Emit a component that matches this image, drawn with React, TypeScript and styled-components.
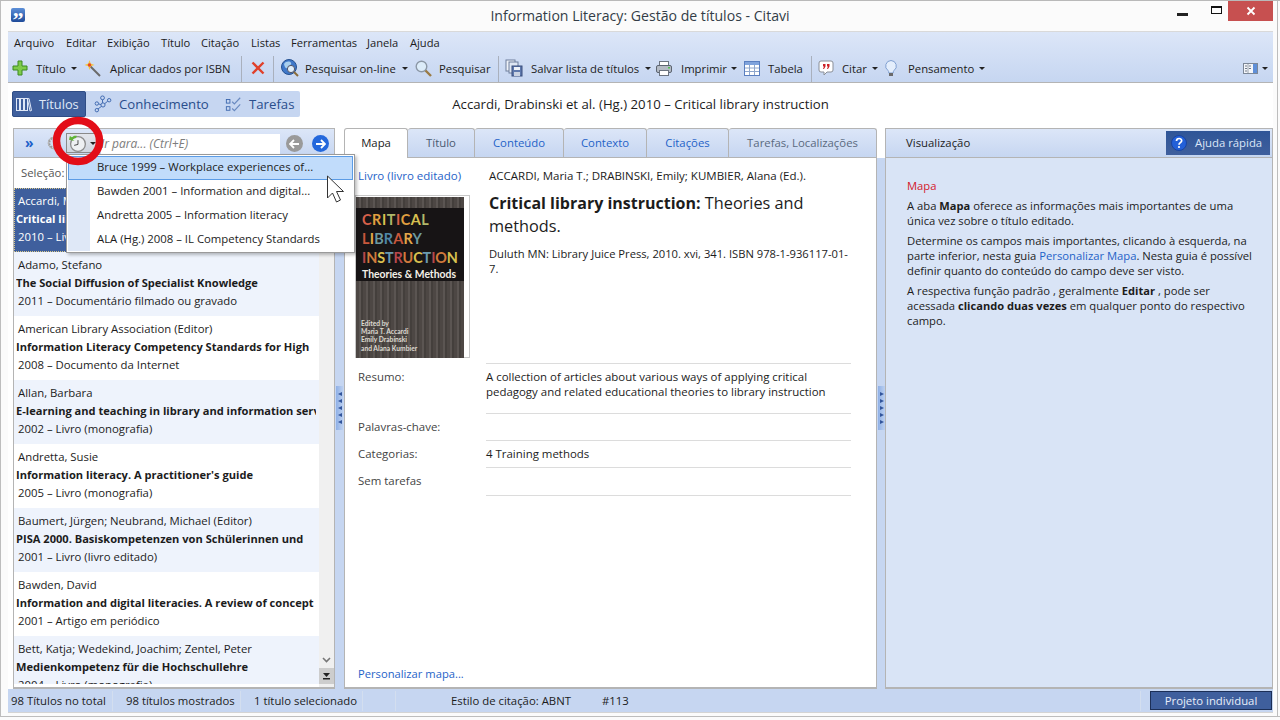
import React from "react";
import styled, { createGlobalStyle } from "styled-components";

const FONT = `"Open Sans", "Noto Sans", "Liberation Sans", sans-serif`;

const Global = createGlobalStyle`
  html, body { margin: 0; padding: 0; width: 1280px; height: 720px; overflow: hidden; background: #fbfbfb; }
  * { box-sizing: border-box; }
  #root { width: 1280px; height: 720px; }
  b { font-size: 11.1px; }
`;

const Win = styled.div`
  position: relative; width: 1280px; height: 720px; background: #fbfbfb;
  font: 11.35px/15px ${FONT}; color: #1c1c1c; overflow: hidden;
  border-top: 1px solid #b9b9b9;
  display: flex; flex-direction: column;
  padding: 0 7px 0 8px;
  &::before { content: ""; position: absolute; left: 0; top: 0; bottom: 3px; width: 1px; background: #bdbdbd; }
  &::after { content: ""; position: absolute; right: 2px; top: 0; bottom: 3px; width: 1px; background: #bdbdbd; }
`;
const TitleBar = styled.div`
  height: 30px; flex: none; display: flex; align-items: flex-start; position: relative; margin-left: -8px; margin-right: -7px; padding-left: 11px;
`;
const AppIcon = styled.div`
  width: 14px; height: 14px; margin-top: 7px; border-radius: 2px; background: linear-gradient(#5c8fd8, #1f4b9a); color: #fff;
  font: bold 22px/24px "Liberation Serif", serif; text-align: center; flex: none; overflow: hidden;
`;
const TitleText = styled.div`
  position: absolute; left: 0; right: 0; top: 0; text-align: center; font-size: 14.1px; line-height: 30px; color: #333d47;
`;
const WinBtns = styled.div`margin-left: auto; display: flex; align-items: flex-start; height: 30px; padding-right: 7px;`;
const WinBtn = styled.div<{ $w: number; $close?: boolean }>`
  width: ${(p) => p.$w}px; height: 20px; display: flex; align-items: center; justify-content: center;
  background: ${(p) => (p.$close ? "#c75050" : "transparent")};
`;
const MinGlyph = styled.div`width: 11px; height: 3px; background: #222; margin-top: 7px;`;
const MaxGlyph = styled.div`width: 11px; height: 8px; border: 1px solid #111; border-top-width: 2px; margin-top: -3px;`;

const Chrome = styled.div`
  flex: none; height: 52px; background: linear-gradient(#dce6f8, #c6d6f1); border-bottom: 1px solid #b4b4b4; border-top: 1px solid #d9d9d9;
  display: flex; flex-direction: column;
`;
const MenuBar = styled.div`display: flex; height: 22px; align-items: center; padding: 0 0 2px 6px; font-size: 11.15px;`;
const MenuItem = styled.div<{ $w: number }>`width: ${(p) => p.$w}px; white-space: nowrap;`;
const Tools = styled.div`display: flex; height: 28px; align-items: center; position: relative; font-size: 11.3px;`;
const Tool = styled.div<{ $left: number }>`
  position: absolute; left: ${(p) => p.$left}px; top: 0; height: 28px; display: flex; align-items: center; white-space: nowrap;
`;
const Caret = styled.span<{ $c?: string }>`
  display: inline-block; width: 0; height: 0; border: 3px solid transparent; border-top: 3px solid ${(p) => p.$c || "#222"}; margin-top: 3px;
`;
const Sep = styled.div<{ $left: number }>`position: absolute; left: ${(p) => p.$left}px; top: 2px; height: 26px; width: 1px; background: #a9b0bd;`;

const SubBar = styled.div`flex: none; height: 45px; display: flex; align-items: center; position: relative; padding: 0 0 3px 4px; background: #fff;`;
const Nav = styled.div`width: 288px; height: 26px; background: #c6d6f1; border-radius: 2px; display: flex; align-items: center; color: #2a4e8c; font-size: 13.2px;`;
const NavBtn = styled.div<{ $w: number; $pad: number; $on?: boolean }>`
  width: ${(p) => p.$w}px; height: 26px; display: flex; align-items: center; gap: 7px; padding-left: ${(p) => p.$pad}px; white-space: nowrap; font-size: ${(p) => (p.$on ? "12.8px" : "13.2px")};
  ${(p) => (p.$on ? "background:#3f5f9d;color:#dfe8f7;border:1px solid #2f4d86;border-radius:2px;" : "")}
`;
const SubTitle = styled.div`position: absolute; left: 0; right: 0; top: 14px; text-align: center; font-size: 13.2px; color: #1c1c1c;`;

const Body = styled.div`
  flex: none; height: 561px; display: flex; background: #fff; padding: 0 0 0 5px; position: relative;
`;
const LeftPanel = styled.div`width: 322px; flex: none; border: 1px solid #b4b4b4; border-bottom-width: 2px; display: flex; flex-direction: column; background: #fff; height: 561px;`;
const LeftBar = styled.div`
  height: 29px; flex: none; background: linear-gradient(#dce6f8, #c6d6f1); border-bottom: 1px solid #b4b4b4; display: flex; align-items: center; position: relative;
`;
const SearchBox = styled.div`
  position: absolute; left: 87px; top: 5px; width: 179px; height: 20px; background: #fff; color: #7d7d7d; font-style: italic; font-size: 12px; line-height: 20px; white-space: nowrap;
`;
const Chevrons = styled.div`position: absolute; left: 11px; top: 5px; color: #1c5fc9; font: bold 14px/18px ${FONT};`;
const RoundBtn = styled.div<{ $left: number; $bg: string }>`
  position: absolute; left: ${(p) => p.$left}px; top: 6px; width: 17px; height: 17px; border-radius: 50%; background: ${(p) => p.$bg};
  display: flex; align-items: center; justify-content: center;
`;
const Selecao = styled.div`height: 30px; flex: none; padding: 7px 0 0 7px; color: #555;`;
const ListWrap = styled.div`flex: 1; min-height: 0; display: flex; overflow: hidden;`;
const List = styled.div`flex: 1; min-width: 0; overflow: hidden; padding-bottom: 3px;`;
const ListClip = styled.div`height: 100%; overflow: hidden;`;
const Row = styled.div<{ $tone: "sel" | "odd" | "even" }>`
  height: 64px; padding: 4px 3px 0 2px; overflow: hidden; white-space: nowrap; line-height: 18px;
  background: ${(p) => (p.$tone === "sel" ? "#3f5f9d" : p.$tone === "odd" ? "#eef3fc" : "#fff")};
  color: ${(p) => (p.$tone === "sel" ? "#fff" : "#1c1c1c")};
  ${(p) => (p.$tone === "sel" ? "outline: 1px dotted #d8c88a; outline-offset: -1px;" : "")}
`;
const RowSub = styled.div`padding-left: 2px;`;
const RowBold = styled.div`font-weight: 700; font-size: 11.1px; overflow: hidden;`;
const Scroll = styled.div`width: 15px; flex: none; background: #f0f0f0; display: flex; flex-direction: column; justify-content: flex-end; align-items: center; padding-bottom: 3px;`;
const ScrollBtn = styled.div<{ $on?: boolean }>`width: 15px; height: 16px; display: flex; align-items: center; justify-content: center; ${(p) => (p.$on ? "background:#cdcdcd;" : "")}`;

const Splitter = styled.div<{ $w: number }>`width: ${(p) => p.$w}px; flex: none; position: relative; background: linear-gradient(#fff 0 30px, #c6d6f1 30px);`;
const Grip = styled.div`
  position: absolute; left: 1px; top: 258px; width: 7px; height: 44px; background: linear-gradient(90deg, #8fb0e6, #bcd0f0);
  display: flex; flex-direction: column; align-items: center; justify-content: center; gap: 3px;
`;
const GripTri = styled.div<{ $right?: boolean }>`
  width: 0; height: 0; border-top: 2.5px solid transparent; border-bottom: 2.5px solid transparent;
  ${(p) => (p.$right ? "border-left: 4px solid #32559c;" : "border-right: 4px solid #32559c;")}
`;

const MainPanel = styled.div`width: 533px; flex: none; display: flex; flex-direction: column; height: 561px;`;
const Tabs = styled.div`display: flex; height: 30px; flex: none; border-bottom: 1px solid #b4b4b4; background: #fff;`;
const TabItem = styled.div<{ $w: number; $on?: boolean; $c?: string }>`
  width: ${(p) => p.$w}px; height: ${(p) => (p.$on ? 30 : 29)}px; display: flex; align-items: center; justify-content: center; white-space: nowrap; padding-bottom: ${(p) => (p.$on ? 2 : 1)}px;
  border: 1px solid #b4b4b4; border-left-width: ${(p) => (p.$on ? 1 : 0)}px; border-bottom: 0; border-radius: 3px 3px 0 0; margin-bottom: -1px; position: relative; z-index: ${(p) => (p.$on ? 1 : 0)};
  background: ${(p) => (p.$on ? "#fff" : "linear-gradient(#dce6f8, #c6d6f1)")};
  color: ${(p) => p.$c || "#1c1c1c"};
`;
const MapBody = styled.div`flex: 1; min-height: 0; background: #fff; border: 1px solid #b4b4b4; border-top: 0; border-bottom-width: 2px; padding: 10px 25px 6px 13px; display: flex; flex-direction: column;`;
const Top = styled.div`display: flex; height: 195px; flex: none;`;
const CoverCol = styled.div`width: 131px; flex: none; display: flex; flex-direction: column;`;
const Link = styled.div`color: #1f63c8; white-space: nowrap; height: 27px; font-size: 11.5px;`;
const CoverFrame = styled.div`width: 115px; height: 163px; margin-left: -3px; border: 1px solid #c8c8c8; padding: 1px 5px 0 0;`;
const Cover = styled.div`
  width: 108px; height: 161px; background: repeating-linear-gradient(90deg, #4d4744 0 3px, #5b5552 3px 5px, #443f3c 5px 7px);
  display: flex; flex-direction: column; color: #e6e2da; position: relative;
`;
const CoverBand = styled.div`margin-top: 11px; background: #171415; height: 73px; padding: 2px 0 0 6px;`;
const CoverLine = styled.div<{ $s: number }>`font: 700 14.4px/19px Lato, sans-serif; letter-spacing: ${(p) => p.$s}px; white-space: nowrap;`;
const L = styled.span<{ $c: string }>`color: ${(p) => p.$c};`;
const CoverSub = styled.div`font: 700 10.4px/14px Lato, sans-serif; color: #f4f0e8; white-space: nowrap;`;
const CoverEd = styled.div`margin-top: auto; padding: 0 0 6px 5px; font: 700 6.7px/8.3px Lato, sans-serif; color: #dedad2; white-space: nowrap;`;
const Info = styled.div`flex: 1; min-width: 0; padding-left: 0;`;
const Authors = styled.div`height: 18px; white-space: nowrap; font-size: 11.5px;`;
const BookTitle = styled.div`font-size: 16.3px; line-height: 23px; margin: 6px 0 8px; b { font-size: 16px; }`;
const Pub = styled.div`line-height: 15px; font-size: 11.2px;`;
const Field = styled.div<{ $h: number; $pad: number; $top?: boolean }>`
  display: grid; grid-template-columns: 128px 1fr; height: ${(p) => p.$h}px; padding-top: ${(p) => p.$pad}px; position: relative; font-size: 11.45px;
  &::after { content: ""; position: absolute; left: 128px; right: 0; bottom: 0; height: 1px; background: #dcdcdc; }
  ${(p) => (p.$top ? `&::before { content: ""; position: absolute; left: 128px; right: 0; top: 0; height: 1px; background: #dcdcdc; }` : "")}
`;
const FieldLabel = styled.div`color: #444;`;
const Spacer = styled.div`flex: 1;`;
const LinkBottom = styled.div`color: #1f63c8; font-size: 11.2px;`;

const RightPanel = styled.div`width: 388px; flex: none; display: flex; flex-direction: column; height: 561px; border: 1px solid #b4b4b4; border-bottom-width: 2px;`;
const RightHead = styled.div`height: 29px; flex: none; background: linear-gradient(#dce6f8, #c6d6f1); border-bottom: 1px solid #b4b4b4; display: flex; align-items: center; padding: 0 2px 1px 20px;`;
const HelpBtn = styled.div`margin-left: auto; width: 104px; height: 24px; background: linear-gradient(#2f5597, #3f5f9d); color: #dce6f8; display: flex; align-items: center; gap: 8px; padding-left: 5px; white-space: nowrap;`;
const RightBody = styled.div`flex: 1; background: #d9e4f6; padding: 20px 20px 0 21px; font-size: 11.25px;`;
const Red = styled.div`color: #d4182c; margin-bottom: 5px; line-height: 15px;`;
const Para = styled.p`margin: 0 0 5px; line-height: 15px; color: #1c1c1c;`;
const BlueLink = styled.span`color: #1f63c8;`;

const Status = styled.div`flex: none; height: 24px; background: #c6d6f1; display: flex; align-items: center; border-bottom: 1px solid #d4d4d4; position: relative;`;
const Stat = styled.div<{ $w: number; $pad: number; $line?: boolean }>`
  width: ${(p) => p.$w}px; padding-left: ${(p) => p.$pad}px; white-space: nowrap; flex: none; height: 20px; line-height: 20px;
  ${(p) => (p.$line ? "border-right: 1px solid #d3deef;" : "")}
`;
const ProjBtn = styled.div`margin-left: auto; width: 122px; height: 19px; background: #3f5f9d; color: #e8eefa; border: 1px solid #1c2f57; text-align: center; line-height: 17px; margin-right: 1px; position: relative;
  &::before { content: ""; position: absolute; left: -11px; top: -1px; width: 1px; height: 20px; background: #d3deef; }
`;
const BottomLine = styled.div`position: absolute; left: 0; right: 0; bottom: 3px; height: 1px; background: #bdbdbd;`;

const Menu = styled.div`
  position: absolute; left: 66px; top: 153px; width: 289px; height: 99px; background: #fff; border: 1px solid #9a9a9a; padding: 1px; z-index: 5;
  box-shadow: 2px 2px 3px rgba(0,0,0,.25);
  &::before { content: ""; position: absolute; left: 1px; top: 1px; bottom: 1px; width: 22px; background: #dfe8f7; }
`;
const MenuRow = styled.div<{ $on?: boolean }>`
  position: relative; height: 24px; line-height: 20px; padding-left: 28px; white-space: nowrap;
  border: 1px solid ${(p) => (p.$on ? "#5b9ce6" : "transparent")};
  background: ${(p) => (p.$on ? "#c1dcfb" : "transparent")};
`;
const RingBox = styled.div`position: absolute; left: 50px; top: 112px; z-index: 7;`;
const HistBtn = styled.div`
  position: absolute; left: 66px; top: 132px; width: 31px; height: 20px; background: linear-gradient(#e3e6ec, #cfd5df); border: 1px solid #8a8a8a; z-index: 6; display: flex; align-items: center; gap: 3px; padding-left: 1px;
`;
const GearBox = styled.div`position: absolute; left: 46px; top: 133px; z-index: 4;`;
const CursorBox = styled.div`position: absolute; left: 326px; top: 174px; z-index: 8;`;

const Plus = () => (
  <svg width="16" height="16" viewBox="0 0 16 16"><path d="M6 1h4v5h5v4h-5v5H6v-5H1V6h5z" fill="#7fcb4a" stroke="#3c8a1e" /></svg>
);
const Wand = () => (
  <svg width="17" height="17" viewBox="0 0 17 17"><path d="M6.500 6.500l9.500 9.500" stroke="#6a6a6a" strokeWidth="2" /><path d="M5.500 0l1.200 3.500 3.800 1.500-3.800 1.300L5.500 10 4.300 6.300.5 5l3.800-1.500z" fill="#f5c33c" /><circle cx="5.500" cy="5" r="1.700" fill="#e5482d" /></svg>
);
const RedX = () => (
  <svg width="14" height="14" viewBox="0 0 14 14"><path d="M1.500 1.500l11 11M12.500 1.500l-11 11" stroke="#e0402a" strokeWidth="2.400" /></svg>
);
const Globe = () => (
  <svg width="18" height="18" viewBox="0 0 18 18"><circle cx="8" cy="8" r="7.500" fill="#3f78c9" stroke="#24508f" /><path d="M3 5c2-3 6-3 7-1s-2 2-3 4-3 2-4-3z" fill="#a8cfee" /><circle cx="10" cy="10" r="3.600" fill="#dfeefa" stroke="#556" /><path d="M13 13l4 4" stroke="#8a6d3a" strokeWidth="2" /></svg>
);
const Mag = () => (
  <svg width="17" height="17" viewBox="0 0 17 17"><circle cx="6.500" cy="6.500" r="5.300" fill="#dcecf9" stroke="#8c98a6" strokeWidth="1.400" /><path d="M10.500 10.500l5.500 5.500" stroke="#9a7b45" strokeWidth="2.400" /></svg>
);
const Save = () => (
  <svg width="18" height="18" viewBox="0 0 18 18"><rect x="1" y="1" width="9" height="11" fill="#eef2f8" stroke="#6e7f9c" /><rect x="4" y="3" width="9" height="11" fill="#dfe7f3" stroke="#6e7f9c" /><rect x="7" y="7" width="10" height="10" fill="#5f79ad" stroke="#3a4f7d" /><rect x="9" y="8" width="6" height="3" fill="#eef2f8" /><rect x="9" y="13" width="6" height="4" fill="#c9d2e2" /></svg>
);
const Printer = () => (
  <svg width="16" height="15" viewBox="0 0 16 15"><rect x="3.500" y=".5" width="9" height="5" fill="#fff" stroke="#6c7480" /><rect x=".5" y="4.500" width="15" height="7" rx="1.500" fill="#b4bbc5" stroke="#5c6470" /><rect x="3.500" y="9.500" width="9" height="5" fill="#fff" stroke="#6c7480" /><rect x="12" y="6" width="2" height="1.500" fill="#4fc04f" /></svg>
);
const TableIco = () => (
  <svg width="16" height="15" viewBox="0 0 16 15"><rect x=".5" y=".5" width="15" height="14" fill="#fff" stroke="#5a7fc0" /><rect x="1" y="1" width="14" height="3" fill="#7fa3dc" /><path d="M1 7h14M1 10.500h14M5.500 4v10M10.500 4v10" stroke="#8ea6cc" /></svg>
);
const Quote = () => (
  <svg width="16" height="16" viewBox="0 0 16 16"><path d="M3 1h10a2 2 0 012 2v7a2 2 0 01-2 2H9l-3 3v-3H3a2 2 0 01-2-2V3a2 2 0 012-2z" fill="#fff" stroke="#8a8f98" /><path d="M5 4h2.500v2.500L6 9H5l1-2.500H5zM9 4h2.500v2.500L10 9H9l1-2.500H9z" fill="#cc2127" /></svg>
);
const Bulb = () => (
  <svg width="12" height="17" viewBox="0 0 12 17"><path d="M6 .5a5.500 5.500 0 00-3 10c.6.600.8 1.500.8 2.500h4.400c0-1 .2-1.900.8-2.500a5.500 5.500 0 00-3-10z" fill="#e4eefc" stroke="#7f9fd0" /><rect x="4" y="13" width="4" height="3" fill="#6a6a6a" /></svg>
);
const Layout = () => (
  <svg width="15" height="11" viewBox="0 0 15 11"><rect x=".5" y=".5" width="14" height="10" fill="#f4f6fa" stroke="#7c8797" /><rect x="10" y="1" width="4" height="9" fill="#5f8fd8" /><path d="M2 3h2M2 5.500h2M2 8h2M6 3h2M6 5.500h2" stroke="#707a88" /><path d="M5 1v9" stroke="#9aa3ae" /></svg>
);
const Books = () => (
  <svg width="16" height="15" viewBox="0 0 16 15" fill="none" stroke="#dfe8f7"><rect x=".5" y="1.500" width="3" height="12" /><rect x="4.500" y="1.500" width="3" height="12" /><rect x="8.500" y="1.500" width="3" height="12" /><path d="M11.500 2l1.500-.5 2.500 12-1.500.5z" /></svg>
);
const Network = () => (
  <svg width="18" height="18" viewBox="0 0 19 19" fill="none" stroke="#3b66ad"><circle cx="9" cy="3" r="2" /><circle cx="16" cy="5.500" r="1.800" /><circle cx="3" cy="9" r="1.800" /><circle cx="9.500" cy="10.500" r="2.200" /><circle cx="3" cy="16" r="1.800" /><path d="M9 5v3.300M14.500 6.500l-3.200 2.700M4.800 9.400l2.500.7M4.300 14.700l3.600-2.700" /></svg>
);
const Tasks = () => (
  <svg width="17" height="16" viewBox="0 0 19 17" fill="none" stroke="#3b66ad"><rect x="1.500" y="3.500" width="4" height="4" /><rect x="1.500" y="11.500" width="4" height="4" /><path d="M8 6l2.500 2.500L17 1.500M8 13.500l2.500 2.500L17 9" stroke="#6a8ac0" strokeWidth="1.300" /></svg>
);
const Clock = () => (
  <svg width="20" height="18" viewBox="0 0 20 19"><circle cx="10.500" cy="10.500" r="7.800" fill="#eef0f2" stroke="#8d8d8d" strokeWidth="1.400" /><path d="M10.500 6.500v4.500l-4 1" stroke="#444" fill="none" /><path d="M1 6l1-4 2 1.500C6 1.500 8 1.500 9.500 2L8 4.500C6.500 4.500 5.500 5 5 6l2 1.500z" fill="#5fb536" /></svg>
);
const Gear = () => (
  <svg width="16" height="18" viewBox="0 0 16 18"><circle cx="8" cy="9" r="5" fill="none" stroke="#9a9a9a" strokeWidth="2.400" strokeDasharray="2.200 1" /><circle cx="8" cy="9" r="5.800" fill="none" stroke="#b5b5b5" strokeWidth="1" /></svg>
);
const Arrow = ({ left }: { left?: boolean }) => (
  <svg width="11" height="10" viewBox="0 0 11 10"><path d={left ? "M5 1L1 5l4 4M1 5h9" : "M6 1l4 4-4 4M10 5H1"} stroke="#fff" strokeWidth="1.800" fill="none" /></svg>
);
const Help = () => (
  <svg width="16" height="16" viewBox="0 0 16 16"><circle cx="8" cy="8" r="7.500" fill="#2360d8" stroke="#1a44a0" /><path d="M5.500 6c0-3.300 5.200-3.300 5.200-.2 0 1.800-2.700 2-2.700 4" stroke="#fff" strokeWidth="1.700" fill="none" /><circle cx="8" cy="12" r="1.100" fill="#fff" /></svg>
);

const people = [
  { tone: "odd", a: "Adamo, Stefano", t: "The Social Diffusion of Specialist Knowledge", s: "2011 – Documentário filmado ou gravado" },
  { tone: "even", a: "American Library Association (Editor)", t: "Information Literacy Competency Standards for High", s: "2008 – Documento da Internet" },
  { tone: "odd", a: "Allan, Barbara", t: "E-learning and teaching in library and information serv", s: "2002 – Livro (monografia)" },
  { tone: "even", a: "Andretta, Susie", t: "Information literacy. A practitioner's guide", s: "2005 – Livro (monografia)" },
  { tone: "odd", a: "Baumert, Jürgen; Neubrand, Michael (Editor)", t: "PISA 2000. Basiskompetenzen von Schülerinnen und", s: "2001 – Livro (livro editado)" },
  { tone: "even", a: "Bawden, David", t: "Information and digital literacies. A review of concept", s: "2001 – Artigo em periódico" },
  { tone: "odd", a: "Bett, Katja; Wedekind, Joachim; Zentel, Peter", t: "Medienkompetenz für die Hochschullehre", s: "2004 – Livro (monografia)" },
] as const;

const Multi = ({ text, colors }: { text: string; colors: string[] }) => (
  <>
    {text.split("").map((c, i) => (
      <L key={i} $c={colors[i % colors.length]}>{c}</L>
    ))}
  </>
);

export default function App() {
  return (
    <Win>
      <Global />
      <TitleBar>
        <AppIcon>”</AppIcon>
        <TitleText>Information Literacy: Gestão de títulos - Citavi</TitleText>
        <WinBtns>
          <WinBtn $w={44}><MinGlyph /></WinBtn>
          <WinBtn $w={24}><MaxGlyph /></WinBtn>
          <WinBtn $w={45} $close>
            <svg width="10" height="10" viewBox="0 0 10 10"><path d="M1.500 1.500l7 7M8.500 1.500l-7 7" stroke="#fff" strokeWidth="1.800" /></svg>
          </WinBtn>
        </WinBtns>
      </TitleBar>
      <Chrome>
        <MenuBar>
          <MenuItem $w={52}>Arquivo</MenuItem>
          <MenuItem $w={41}>Editar</MenuItem>
          <MenuItem $w={54}>Exibição</MenuItem>
          <MenuItem $w={40}>Título</MenuItem>
          <MenuItem $w={50}>Citação</MenuItem>
          <MenuItem $w={40}>Listas</MenuItem>
          <MenuItem $w={76}>Ferramentas</MenuItem>
          <MenuItem $w={43}>Janela</MenuItem>
          <MenuItem $w={40}>Ajuda</MenuItem>
        </MenuBar>
        <Tools>
          <Tool $left={4}><Plus /></Tool>
          <Tool $left={28}>Título</Tool>
          <Tool $left={63}><Caret /></Tool>
          <Tool $left={76}><Wand /></Tool>
          <Tool $left={102}>Aplicar dados por ISBN</Tool>
          <Sep $left={233} />
          <Tool $left={243}><RedX /></Tool>
          <Sep $left={265} />
          <Tool $left={273}><Globe /></Tool>
          <Tool $left={297}>Pesquisar on-line</Tool>
          <Tool $left={394}><Caret /></Tool>
          <Tool $left={407}><Mag /></Tool>
          <Tool $left={431}>Pesquisar</Tool>
          <Sep $left={490} />
          <Tool $left={497}><Save /></Tool>
          <Tool $left={523}>Salvar lista de títulos</Tool>
          <Tool $left={637}><Caret /></Tool>
          <Tool $left={648}><Printer /></Tool>
          <Tool $left={673}>Imprimir</Tool>
          <Tool $left={723}><Caret /></Tool>
          <Tool $left={736}><TableIco /></Tool>
          <Tool $left={760}>Tabela</Tool>
          <Sep $left={803} />
          <Tool $left={810}><Quote /></Tool>
          <Tool $left={834}>Citar</Tool>
          <Tool $left={864}><Caret /></Tool>
          <Tool $left={877}><Bulb /></Tool>
          <Tool $left={900}>Pensamento</Tool>
          <Tool $left={971}><Caret /></Tool>
          <Tool $left={1235}><Layout /></Tool>
          <Tool $left={1254}><Caret /></Tool>
        </Tools>
      </Chrome>
      <SubBar>
        <Nav>
          <NavBtn $w={74} $pad={3} $on><Books />Títulos</NavBtn>
          <NavBtn $w={130} $pad={8}><Network />Conhecimento</NavBtn>
          <NavBtn $w={84} $pad={9}><Tasks />Tarefas</NavBtn>
        </Nav>
        <SubTitle>Accardi, Drabinski et al. (Hg.) 2010 – Critical library instruction</SubTitle>
      </SubBar>
      <Body>
        <LeftPanel>
          <LeftBar>
            <Chevrons>»</Chevrons>
            <SearchBox>Ir para... (Ctrl+E)</SearchBox>
            <RoundBtn $left={272} $bg="#9a9a9a"><Arrow left /></RoundBtn>
            <RoundBtn $left={298} $bg="#2468dc"><Arrow /></RoundBtn>
          </LeftBar>
          <Selecao>Seleção:</Selecao>
          <ListWrap>
            <List>
              <ListClip>
                <Row $tone="sel">
                  <RowSub>Accardi, Maria T.; Drabinski, Emily</RowSub>
                  <RowBold>Critical library instruction</RowBold>
                  <RowSub>2010 – Livro (livro editado)</RowSub>
                </Row>
                {people.map((p) => (
                  <Row key={p.a} $tone={p.tone}>
                    <RowSub>{p.a}</RowSub>
                    <RowBold>{p.t}</RowBold>
                    <RowSub>{p.s}</RowSub>
                  </Row>
                ))}
              </ListClip>
            </List>
            <Scroll>
              <ScrollBtn>
                <svg width="9" height="6" viewBox="0 0 9 6"><path d="M1 1l3.500 3.500L8 1" stroke="#777" strokeWidth="1.600" fill="none" /></svg>
              </ScrollBtn>
              <ScrollBtn $on>
                <svg width="9" height="7" viewBox="0 0 9 7"><path d="M1 0h7L4.500 4z" fill="#222" /><rect x="1" y="5" width="7" height="1.500" fill="#222" /></svg>
              </ScrollBtn>
            </Scroll>
          </ListWrap>
        </LeftPanel>
        <Splitter $w={9}>
          <Grip>{[0, 1, 2, 3, 4].map((i) => <GripTri key={i} />)}</Grip>
        </Splitter>
        <MainPanel>
          <Tabs>
            <TabItem $w={64} $on>Mapa</TabItem>
            <TabItem $w={67} $c="#4a5a70">Título</TabItem>
            <TabItem $w={89} $c="#1f63c8">Conteúdo</TabItem>
            <TabItem $w={83} $c="#1f63c8">Contexto</TabItem>
            <TabItem $w={82} $c="#1f63c8">Citações</TabItem>
            <TabItem $w={148} $c="#5a6a80">Tarefas, Localizações</TabItem>
          </Tabs>
          <MapBody>
            <Top>
              <CoverCol>
                <Link>Livro (livro editado)</Link>
                <CoverFrame>
                  <Cover>
                    <CoverBand>
                      <CoverLine $s={0.55}><Multi text="CRITICAL" colors={["#d8604a", "#e0a040", "#d8c050", "#b0b86a"]} /></CoverLine>
                      <CoverLine $s={0.2}><Multi text="LIBRARY" colors={["#c8583c", "#e2a84a", "#6d9aa0", "#4f86a8"]} /></CoverLine>
                      <CoverLine $s={-0.1}><Multi text="INSTRUCTION" colors={["#b8484c", "#d07a3c", "#d8c050", "#6a9ab0"]} /></CoverLine>
                      <CoverSub>Theories &amp; Methods</CoverSub>
                    </CoverBand>
                    <CoverEd>
                      Edited by<br />Maria T. Accardi<br />Emily Drabinski<br />and Alana Kumbier
                    </CoverEd>
                  </Cover>
                </CoverFrame>
              </CoverCol>
              <Info>
                <Authors>ACCARDI, Maria T.; DRABINSKI, Emily; KUMBIER, Alana (Ed.).</Authors>
                <BookTitle><b>Critical library instruction:</b> Theories and methods.</BookTitle>
                <Pub>Duluth MN: Library Juice Press, 2010. xvi, 341. ISBN 978-1-936117-01-7.</Pub>
              </Info>
            </Top>
            <Field $h={51} $pad={6} $top>
              <FieldLabel>Resumo:</FieldLabel>
              <div>A collection of articles about various ways of applying critical pedagogy and related educational theories to library instruction</div>
            </Field>
            <Field $h={27} $pad={5}><FieldLabel>Palavras-chave:</FieldLabel><div /></Field>
            <Field $h={27} $pad={5}><FieldLabel>Categorias:</FieldLabel><div>4 Training methods</div></Field>
            <Field $h={28} $pad={5}><FieldLabel>Sem tarefas</FieldLabel><div /></Field>
            <Spacer />
            <LinkBottom>Personalizar mapa...</LinkBottom>
          </MapBody>
        </MainPanel>
        <Splitter $w={8}>
          <Grip>{[0, 1, 2, 3, 4].map((i) => <GripTri key={i} $right />)}</Grip>
        </Splitter>
        <RightPanel>
          <RightHead>
            Visualização
            <HelpBtn><Help />Ajuda rápida</HelpBtn>
          </RightHead>
          <RightBody>
            <Red>Mapa</Red>
            <Para>A aba <b>Mapa</b> oferece as informações mais importantes de uma única vez sobre o título editado.</Para>
            <Para>Determine os campos mais importantes, clicando à esquerda, na parte inferior, nesta guia <BlueLink>Personalizar Mapa</BlueLink>. Nesta guia é possível definir quanto do conteúdo do campo deve ser visto.</Para>
            <Para>A respectiva função padrão , geralmente <b>Editar</b> , pode ser acessada <b>clicando duas vezes</b> em qualquer ponto do respectivo campo.</Para>
          </RightBody>
        </RightPanel>
      </Body>
      <Status>
        <Stat $w={105} $pad={3} $line>98 Títulos no total</Stat>
        <Stat $w={128} $pad={13} $line>98 títulos mostrados</Stat>
        <Stat $w={122} $pad={13} $line>1 título selecionado</Stat>
        <Stat $w={33} $pad={0} $line />
        <Stat $w={206} $pad={55}>Estilo de citação: ABNT</Stat>
        <Stat $w={60} $pad={0}>#113</Stat>
        <ProjBtn>Projeto individual</ProjBtn>
      </Status>
      <BottomLine />
      <GearBox><Gear /></GearBox>
      <HistBtn><Clock /><Caret /></HistBtn>
      <Menu>
        <MenuRow $on>Bruce 1999 – Workplace experiences of...</MenuRow>
        <MenuRow>Bawden 2001 – Information and digital...</MenuRow>
        <MenuRow>Andretta 2005 – Information literacy</MenuRow>
        <MenuRow>ALA (Hg.) 2008 – IL Competency Standards</MenuRow>
      </Menu>
      <RingBox>
        <svg width="56" height="56" viewBox="0 0 56 56"><ellipse cx="28" cy="28" rx="21.500" ry="20.500" fill="none" stroke="#e30d18" strokeWidth="7.500" /></svg>
      </RingBox>
      <CursorBox>
        <svg width="22" height="30" viewBox="0 0 22 30"><path d="M1.500 1v22l5-5 4 9 4-2-4-8.500h7z" fill="#fff" stroke="#333" /></svg>
      </CursorBox>
    </Win>
  );
}
